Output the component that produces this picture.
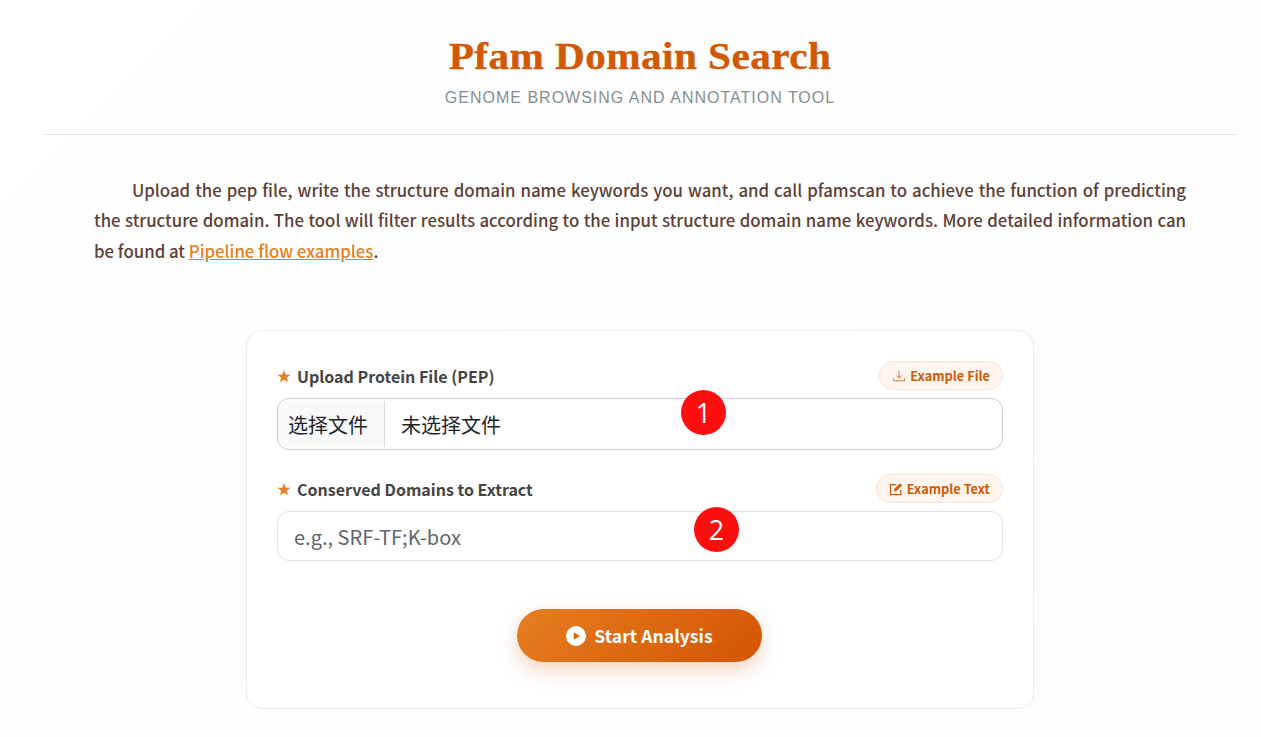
<main class="page">
  <header class="head">
    <h1>Pfam Domain Search</h1>
    <p class="sub">Genome Browsing and Annotation Tool</p>
  </header>

  <p class="intro">Upload the pep file, write the structure domain name keywords you want, and call pfamscan to achieve the function of predicting the structure domain. The tool will filter results according to the input structure domain name keywords. More detailed information can be found at <a href="#top">Pipeline flow examples</a>.</p>

  <form class="card">
    <div class="field">
      <div class="row">
        <label for="pep"><span class="star">★</span>Upload Protein File (PEP)</label>
        <button type="button" class="chip">
          <svg viewBox="0 0 16 16" width="14" height="14" fill="none" stroke="currentColor" stroke-width="0.9"><path d="M8 2v8.5M5 7.5 8 10.5 11 7.5M1.5 10.5v3h13v-3"/></svg>
          Example File
        </button>
      </div>
      <div class="control file">
        <span class="pick">选择文件</span>
        <span class="none">未选择文件</span>
        <span class="badge one">1</span>
      </div>
    </div>

    <div class="field second">
      <div class="row">
        <label for="dom"><span class="star">★</span>Conserved Domains to Extract</label>
        <button type="button" class="chip">
          <svg viewBox="0 0 16 16" width="14" height="14" fill="none" stroke="currentColor" stroke-width="1.4"><path d="M13.5 9v5.3H1.7V3h6.5"/><path d="M5.5 10.8l.6-2.9L12.7 1.3l2.3 2.3-6.6 6.6z" fill="currentColor" stroke="none"/></svg>
          Example Text
        </button>
      </div>
      <div class="control text">
        <input id="dom" placeholder="e.g., SRF-TF;K-box" />
        <span class="badge two">2</span>
      </div>
    </div>

    <div class="actions">
      <button type="button" class="go">
        <svg viewBox="0 0 20 20" width="20" height="20"><circle cx="10" cy="10" r="10" fill="#fff"/><path d="M7.8 6.2v7.6L14 10z" fill="#d9650f"/></svg>
        Start Analysis
      </button>
    </div>
  </form>
</main>

<style>
  :global(body) {
    margin: 0;
    background: #fff;
    font-family: "Noto Sans CJK SC", "Noto Sans", sans-serif;
  }
  .page {
    width: 1280px;
    height: 737px;
    overflow: hidden;
    box-sizing: border-box;
    padding: 0 43px;
    background: linear-gradient(135deg, #fff 0%, #fdfdfe 100%);
  }
  .head {
    height: 135px;
    box-sizing: border-box;
    padding-top: 33px;
    text-align: center;
    border-bottom: 1px solid #e2e5e8;
  }
  h1 {
    margin: 0;
    font: 700 38px/46px "Liberation Serif", serif;
    letter-spacing: 0.4px;
    color: #d15804;
    transform: scaleX(1.085);
    -webkit-text-stroke: 0.4px #d15804;
  }
  .sub {
    margin: 7px 0 0;
    font: 400 16px/24px "Liberation Sans", sans-serif;
    letter-spacing: 1px;
    text-transform: uppercase;
    color: #848e92;
  }
  .intro {
    margin: 40px 51px 0;
    font-size: 16.8px;
    line-height: 30.4px;
    font-weight: 500;
    text-align: justify;
    text-indent: 38px;
    color: #5d4037;
  }
  .intro a { color: #e67e22; }
  .card {
    box-sizing: border-box;
    width: 788px;
    height: 379px;
    margin: 64px auto 0;
    padding: 30px;
    background: #fff;
    border: 1px solid #ecedef;
    border-radius: 16px;
  }
  .second { margin-top: 24px; }
  .row {
    display: flex;
    justify-content: space-between;
    align-items: center;
    height: 29px;
    margin-bottom: 8px;
  }
  label {
    font-size: 16px;
    font-weight: 700;
    color: #444;
  }
  .star {
    display: inline-block;
    width: 20px;
    color: #e67e22;
    font-size: 14px;
    line-height: 1;
    vertical-align: 2px;
  }
  .chip {
    display: inline-flex;
    align-items: center;
    gap: 4px;
    height: 29px;
    padding: 0 12px;
    border: 1px solid #f8e3d3;
    border-radius: 15px;
    background: #fdf5ee;
    color: #cf5a0a;
    font: 700 12.8px "Noto Sans CJK SC", sans-serif;
  }
  .control {
    position: relative;
    box-sizing: border-box;
    display: flex;
    align-items: center;
    width: 726px;
    border-radius: 12px;
    background: #fff;
  }
  .file {
    height: 52px;
    border: 1px solid #cdced3;
    font-size: 20px;
    color: #212529;
  }
  .pick {
    align-self: stretch;
    display: flex;
    align-items: center;
    padding: 0 16px 0 10px;
    margin: 2px 0;
    background: #f8f9fb;
    border-right: 1px solid #d8dade;
    border-radius: 11px 0 0 11px;
  }
  .none { margin-left: 16px; }
  .text {
    height: 50px;
    border: 1px solid #e2e4e8;
  }
  input {
    width: 100%;
    height: 100%;
    box-sizing: border-box;
    border: 0;
    outline: 0;
    background: none;
    padding: 0 16px;
    font: 400 20px "Noto Sans CJK SC", sans-serif;
  }
  input::placeholder { color: #5f666d; opacity: 1; }
  .badge {
    position: absolute;
    width: 45px;
    height: 45px;
    border-radius: 50%;
    background: #fe0f0f;
    color: #fff;
    font: 400 27px/45px "Open Sans", sans-serif;
    text-align: center;
  }
  .one { left: 403px; top: -9px; }
  .two { left: 416px; top: -5px; }
  .actions {
    display: flex;
    justify-content: center;
    margin-top: 48px;
    padding-right: 1px;
  }
  .go {
    display: inline-flex;
    align-items: center;
    justify-content: center;
    gap: 8px;
    width: 245px;
    height: 53px;
    border: 0;
    border-radius: 27px;
    background: linear-gradient(135deg, #e67e22, #d35400);
    color: #fff;
    font: 700 17.6px "Noto Sans CJK SC", sans-serif;
    box-shadow: 0 8px 20px rgba(211, 84, 0, 0.25);
  }
</style>
